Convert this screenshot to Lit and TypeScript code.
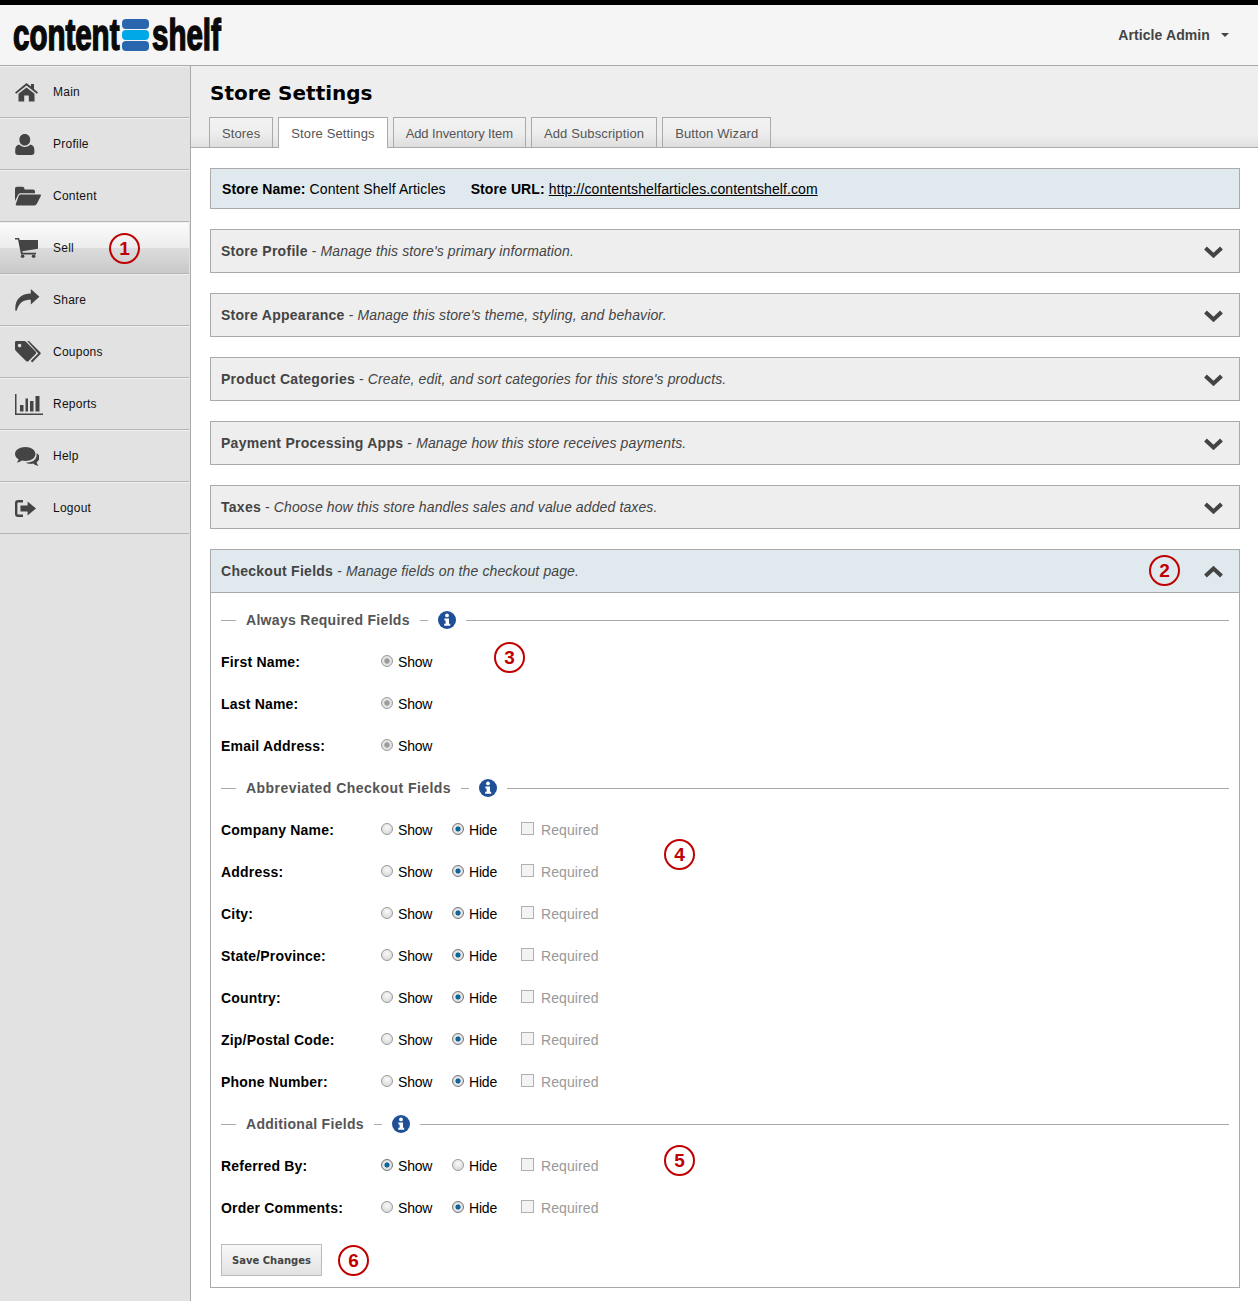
import { LitElement, html, css, svg } from 'lit';
import { customElement } from 'lit/decorators.js';

const navIcons: Record<string, unknown> = {
  Main: svg`<path d="M11.5 1 L16 4.6 V2 H19 V7 L23 10.4 L21.8 11.8 L11.5 3.6 L1.2 11.8 L0 10.4 Z M11.5 5.4 L19.5 11.8 V19.5 H13.8 V13.5 H9.2 V19.5 H3.5 V11.8 Z"/>`,
  Profile: svg`<path d="M9.8 0 C13.2 0 15.2 2.6 15.2 5.8 C15.2 9 13.2 11.6 9.8 11.6 C6.4 11.6 4.4 9 4.4 5.8 C4.4 2.6 6.4 0 9.8 0 Z M4.2 10.6 C5.6 12.2 7.5 13 9.8 13 C12.1 13 14 12.2 15.4 10.6 C18 11.2 19.4 13 19.4 16.4 V18.2 C19.4 20 18.4 21 16.6 21 H3 C1.2 21 0.2 20 0.2 18.2 V16.4 C0.2 13 1.6 11.2 4.2 10.6 Z"/>`,
  Content: svg`<path d="M0 3 C0 1.5 .8 .8 2 .8 H7.4 C8.6 .8 9.2 1.6 9.4 2.6 L9.6 3.4 H18 C19.2 3.4 20 4.2 20 5.4 V7.2 H6 C4.4 7.2 3.6 7.8 3 9 L0 15 Z M5.6 8.6 H25.2 C26 8.6 26.2 9.2 25.8 10 L22 17.6 C21.4 18.8 20.6 19.4 19.2 19.4 H1.6 C.8 19.4 .4 18.8 .8 18 L3.8 9.8 C4.2 9 4.8 8.6 5.6 8.6 Z"/>`,
  Sell: svg`<path d="M0 0 H4 L4.7 2 H23 V10.8 L7.3 13.2 L7.7 14.8 H21 V16.4 H6 L3 1.6 H0 Z"/><circle cx="7.6" cy="18.2" r="1.8"/><circle cx="18.6" cy="18.2" r="1.8"/>`,
  Share: svg`<path d="M15.8 0 L24.4 7.8 L15.8 15.6 V10.8 C9.5 10.8 4.2 12.6 1.6 21.8 L.4 21.8 C-.6 10.6 5.6 4.8 15.8 4.6 Z"/>`,
  Coupons: svg`<path d="M1.6 0 H9 C10 0 10.6 .4 11.2 1 L20.6 10.4 C21.4 11.2 21.4 12.2 20.6 13 L13.6 20 C12.8 20.8 11.8 20.8 11 20 L1.4 10.4 C.6 9.6 0 8.8 0 7.8 V1.6 C0 .6 .6 0 1.6 0 Z M4.6 2.8 A1.8 1.8 0 1 0 4.6 6.4 A1.8 1.8 0 1 0 4.6 2.8 Z" fill-rule="evenodd"/><path d="M12.2 0 H14 L25 11 C26 12 26 12.6 25 13.6 L17.2 21.4 L15.8 20 L23.2 12.4 Z"/>`,
  Reports: svg`<path d="M0 0 H1.5 V19.5 H28 V21 H0 Z M5 11 H8.5 V17.5 H5 Z M10.5 4.5 H13 V17.5 H10.5 Z M15 7 H18.5 V17.5 H15 Z M20.5 2 H24.5 V17.5 H20.5 Z"/>`,
  Help: svg`<path d="M10.4 0 C16.2 0 20.4 3 20.4 7 C20.4 11 16.2 14 10.4 14 C9.2 14 8 13.9 6.8 13.6 C5.4 14.8 3.6 15.4 1.8 15.6 C2.8 14.5 3.4 13.4 3.6 12.2 C1.4 11 0 9.2 0 7 C0 3 4.6 0 10.4 0 Z"/><path d="M21.6 6.2 C23.6 7.2 24.4 8.8 24.4 10.6 C24.4 12.6 23.2 14.2 21.6 15.2 C21.8 16.4 22.4 17.4 23.6 18.8 C21.4 18.6 19.6 18 18.2 16.6 C17 16.8 15.8 17 14.4 16.8 C13 16.6 11.8 16.2 10.8 15.4 C16.8 15.6 22.6 12.8 21.6 6.2 Z"/>`,
  Logout: svg`<path d="M3 0 H8 V2.4 H3.6 C2.8 2.4 2.4 2.8 2.4 3.6 V13.4 C2.4 14.2 2.8 14.6 3.6 14.6 H8 V17 H3 C1.2 17 0 15.8 0 14 V3 C0 1.2 1.2 0 3 0 Z M12.6 1.6 L21 8.5 L12.6 15.4 V11.6 H5.4 V5.4 H12.6 Z"/>`,
};

const navIconBox: Record<string, [number, number]> = {
  Main: [23, 20],
  Profile: [20, 21],
  Content: [26, 20],
  Sell: [23, 20],
  Share: [25, 22],
  Coupons: [26, 22],
  Reports: [28, 21],
  Help: [24, 19],
  Logout: [21, 17],
};

const navItems = ['Main', 'Profile', 'Content', 'Sell', 'Share', 'Coupons', 'Reports', 'Help', 'Logout'];

const tabs = ['Stores', 'Store Settings', 'Add Inventory Item', 'Add Subscription', 'Button Wizard'];

const accordions = [
  ['Store Profile', "Manage this store's primary information."],
  ['Store Appearance', "Manage this store's theme, styling, and behavior."],
  ['Product Categories', "Create, edit, and sort categories for this store's products."],
  ['Payment Processing Apps', 'Manage how this store receives payments.'],
  ['Taxes', 'Choose how this store handles sales and value added taxes.'],
];

const abbreviated = ['Company Name:', 'Address:', 'City:', 'State/Province:', 'Country:', 'Zip/Postal Code:', 'Phone Number:'];

const markers = [
  [1, 109, 233],
  [2, 1149, 555],
  [3, 494, 642],
  [4, 664, 839],
  [5, 664, 1145],
  [6, 338, 1245],
];

@customElement('app-root')
export class AppRoot extends LitElement {
  static styles = css`
    :host {
      display: block;
      position: relative;
      width: 1258px;
      height: 1301px;
      overflow: hidden;
      background: #fff;
      font-family: 'Liberation Sans', Arial, sans-serif;
      font-size: 14px;
      color: #000;
    }
    .topbar {
      display: flex;
      justify-content: space-between;
      align-items: center;
      height: 60px;
      border-top: 5px solid #000;
      border-bottom: 1px solid #aaa;
      background: #f5f5f5;
    }
    .logo {
      display: flex;
      align-items: center;
      height: 36px;
      margin-left: 13px;
      margin-top: -1px;
      color: #0a0a0a;
      font-size: 44px;
      font-weight: bold;
      line-height: 36px;
      -webkit-text-stroke: 1.6px #0a0a0a;
    }
    .word {
      display: block;
      flex: none;
      white-space: nowrap;
      transform-origin: left center;
      transform: scaleX(0.67);
    }
    .word.w-content {
      width: 157px;
      margin-right: -52px;
    }
    .word.w-shelf {
      width: 104px;
      margin-right: -36px;
    }
    .mark {
      display: flex;
      flex-direction: column;
      flex: none;
      gap: 1px;
      width: 27px;
      margin: 0 3px 0 4px;
    }
    .mark span {
      display: block;
      height: 10px;
      border-radius: 4px;
      background: #2a66ad;
    }
    .mark span.mid {
      background: #00a8e8;
    }
    .user {
      display: flex;
      align-items: center;
      gap: 11px;
      margin-right: 29px;
      font-weight: bold;
      color: #444;
      letter-spacing: 0.1px;
    }
    .caret {
      width: 0;
      height: 0;
      border-left: 4.5px solid transparent;
      border-right: 4.5px solid transparent;
      border-top: 4.5px solid #444;
    }
    .body {
      display: flex;
      height: 1235px;
    }
    .sidebar {
      flex: none;
      width: 190px;
      background: #e2e2e2;
      border-right: 1px solid #aaa;
    }
    .nav-item {
      display: flex;
      align-items: center;
      box-sizing: border-box;
      width: 189px;
      height: 52px;
      padding-left: 15px;
      border-top: 1px solid #f0f0f0;
      border-bottom: 1px solid #b5b5b5;
      font-size: 12px;
      letter-spacing: 0.25px;
      color: #111;
    }
    .nav-item.active {
      background: linear-gradient(#fbfbfb 0, #ececec 50%, #dcdcdc 50%, #c9c9c9 100%);
    }
    .nav-icon {
      flex: none;
      width: 38px;
      display: flex;
      align-items: center;
    }
    .nav-icon svg {
      display: block;
      fill: #444;
    }
    .main {
      flex: 1;
      min-width: 0;
    }
    .head {
      box-sizing: border-box;
      height: 82px;
      padding-left: 19px;
      border-bottom: 1px solid #aaa;
      background: linear-gradient(#eee 0, #eee 85%, #e0e0e0 100%);
    }
    .head h1 {
      margin: 0;
      padding-top: 15px;
      height: 37px;
      box-sizing: border-box;
      line-height: 25px;
      font-family: 'DejaVu Sans', Verdana, sans-serif;
      font-size: 20px;
      font-weight: bold;
      color: #000;
    }
    .tabs {
      display: flex;
      gap: 5px;
      padding-top: 14px;
      margin-left: -1px;
    }
    .tab {
      box-sizing: border-box;
      height: 30px;
      padding: 0 12px;
      line-height: 31px;
      border: 1px solid #aaa;
      border-bottom: 0;
      background: linear-gradient(#f2f2f2 0, #eee 50%, #ddd 100%);
      color: #555;
      font-size: 13px;
      letter-spacing: 0.12px;
    }
    .tab.tight {
      letter-spacing: -0.1px;
    }
    .tab.active {
      height: 31px;
      background: #fff;
      position: relative;
    }
    .content {
      padding: 20px 18px 0 19px;
    }
    .store-bar {
      box-sizing: border-box;
      display: flex;
      align-items: center;
      height: 41px;
      padding-left: 11px;
      border: 1px solid #aaa;
      background: #dfe9ee;
      margin-bottom: 20px;
      letter-spacing: 0.1px;
    }
    .store-bar .url {
      margin-left: 25px;
    }
    .store-bar a {
      color: #000;
      text-decoration: underline;
    }
    .acc {
      box-sizing: border-box;
      display: flex;
      align-items: center;
      justify-content: space-between;
      height: 44px;
      padding: 0 16px 0 10px;
      border: 1px solid #aaa;
      background: #eee;
      color: #444;
      margin-bottom: 20px;
      letter-spacing: 0.12px;
    }
    .acc b {
      letter-spacing: 0.27px;
    }
    .acc svg {
      display: block;
      margin-top: 2px;
      fill: none;
      stroke: #444;
      stroke-width: 4;
    }
    .acc.open {
      background: #dfe9ee;
      margin-bottom: 0;
    }
    .panel {
      box-sizing: border-box;
      height: 695px;
      padding: 6px 10px 0;
      border: 1px solid #aaa;
      border-top: 0;
    }
    .legend {
      display: flex;
      align-items: center;
      height: 42px;
      color: #555;
      font-weight: bold;
      letter-spacing: 0.3px;
    }
    .legend.wide {
      letter-spacing: 0.45px;
    }
    .rule {
      height: 1px;
      background: #aaa;
    }
    .rule.lead {
      flex: none;
      width: 15px;
      margin-right: 10px;
    }
    .rule.dash {
      flex: none;
      width: 8px;
      margin: 0 10px;
    }
    .rule.fill {
      flex: 1;
      margin-left: 10px;
    }
    .info {
      display: block;
      flex: none;
    }
    .row {
      display: flex;
      align-items: center;
      height: 42px;
    }
    .row label {
      flex: none;
      width: 160px;
      font-weight: bold;
      letter-spacing: 0.2px;
    }
    .opt {
      display: flex;
      align-items: center;
      flex: none;
      width: 71px;
      letter-spacing: -0.2px;
    }
    .opt.hide {
      width: 69px;
    }
    .radio {
      box-sizing: border-box;
      flex: none;
      width: 12px;
      height: 12px;
      margin-right: 5px;
      margin-top: -2px;
      border-radius: 50%;
      border: 1px solid #9a9a9a;
      background: radial-gradient(circle at 50% 35%, #f8f8f8, #d4d4d4);
    }
    .radio.on {
      border-color: #777;
      background: radial-gradient(circle, #0a6fa8 0, #0a5f95 30%, #e8e8e8 42%, #cfcfcf 100%);
    }
    .radio.locked {
      background: radial-gradient(circle, #9c9c9c 0, #9c9c9c 32%, #e8e8e8 45%, #d4d4d4 100%);
    }
    .check {
      box-sizing: border-box;
      flex: none;
      width: 13px;
      height: 13px;
      margin-right: 7px;
      margin-top: -3px;
      border: 1px solid #b0b0b0;
      background: #f3f3f3;
    }
    .required {
      display: flex;
      align-items: center;
      color: #999;
      letter-spacing: 0.1px;
    }
    .save {
      box-sizing: border-box;
      width: 101px;
      height: 32px;
      margin-top: 15px;
      padding: 1px 0 0;
      border: 1px solid #bbb;
      background: linear-gradient(#f8f8f8, #e2e2e2);
      color: #444;
      font-family: 'DejaVu Sans', Verdana, sans-serif;
      font-size: 10px;
      font-weight: bold;
    }
    .marker {
      position: absolute;
      box-sizing: border-box;
      width: 31px;
      height: 31px;
      border: 2px solid #c00000;
      border-radius: 50%;
      color: #c00000;
      font-size: 19px;
      font-weight: bold;
      line-height: 27px;
      text-align: center;
    }
  `;

  renderInfo() {
    return html`<svg class="info" width="18" height="18" viewBox="0 0 18 18">
      <circle cx="9" cy="9" r="9" fill="#1f4f96"></circle>
      <circle cx="9" cy="4.4" r="1.9" fill="#fff"></circle>
      <path d="M6.4 7.4 H11 V12.8 H12.2 V14.8 H6.2 V12.8 H7.6 V9.4 H6.4 Z" fill="#fff"></path>
    </svg>`;
  }

  renderLegend(title: string, wide = false) {
    return html`<div class="legend ${wide ? 'wide' : ''}">
      <span class="rule lead"></span>
      <span>${title}</span>
      <span class="rule dash"></span>
      ${this.renderInfo()}
      <span class="rule fill"></span>
    </div>`;
  }

  renderField(label: string, show: boolean) {
    return html`<div class="row">
      <label>${label}</label>
      <span class="opt"><span class="radio ${show ? 'on' : ''}"></span>Show</span>
      <span class="opt hide"><span class="radio ${show ? '' : 'on'}"></span>Hide</span>
      <span class="required"><span class="check"></span>Required</span>
    </div>`;
  }

  render() {
    return html`
      <header class="topbar">
        <div class="logo">
          <span class="word w-content">content</span>
          <span class="mark"><span></span><span class="mid"></span><span></span></span>
          <span class="word w-shelf">shelf</span>
        </div>
        <div class="user">Article Admin <span class="caret"></span></div>
      </header>
      <div class="body">
        <nav class="sidebar">
          ${navItems.map(name => {
            const [w, h] = navIconBox[name];
            return html`<div class="nav-item ${name === 'Sell' ? 'active' : ''}">
              <span class="nav-icon">
                <svg width="${w}" height="${h}" viewBox="0 0 ${w} ${h}">${navIcons[name]}</svg>
              </span>
              ${name}
            </div>`;
          })}
        </nav>
        <main class="main">
          <div class="head">
            <h1>Store Settings</h1>
            <div class="tabs">
              ${tabs.map(t => html`<div class="tab ${t === 'Store Settings' ? 'active' : ''} ${t === 'Add Inventory Item' ? 'tight' : ''}">${t}</div>`)}
            </div>
          </div>
          <div class="content">
            <div class="store-bar">
              <span><b>Store Name:</b> Content Shelf Articles</span>
              <span class="url"><b>Store URL:</b> <a href="#">http://contentshelfarticles.contentshelf.com</a></span>
            </div>
            ${accordions.map(([title, desc]) => html`
              <div class="acc">
                <span><b>${title}</b> - <i>${desc}</i></span>
                <svg width="19" height="12" viewBox="0 0 19 12"><path d="M1.5 2 L9.5 9.5 L17.5 2"></path></svg>
              </div>
            `)}
            <div class="acc open">
              <span><b>Checkout Fields</b> - <i>Manage fields on the checkout page.</i></span>
              <svg width="19" height="12" viewBox="0 0 19 12"><path d="M1.5 10 L9.5 2.5 L17.5 10"></path></svg>
            </div>
            <div class="panel">
              ${this.renderLegend('Always Required Fields')}
              ${['First Name:', 'Last Name:', 'Email Address:'].map(l => html`
                <div class="row">
                  <label>${l}</label>
                  <span class="opt"><span class="radio locked"></span>Show</span>
                </div>
              `)}
              ${this.renderLegend('Abbreviated Checkout Fields', true)}
              ${abbreviated.map(l => this.renderField(l, false))}
              ${this.renderLegend('Additional Fields')}
              ${this.renderField('Referred By:', true)}
              ${this.renderField('Order Comments:', false)}
              <button class="save">Save Changes</button>
            </div>
          </div>
        </main>
      </div>
      ${markers.map(([n, x, y]) => html`<div class="marker" style="left:${x}px;top:${y}px">${n}</div>`)}
    `;
  }
}
